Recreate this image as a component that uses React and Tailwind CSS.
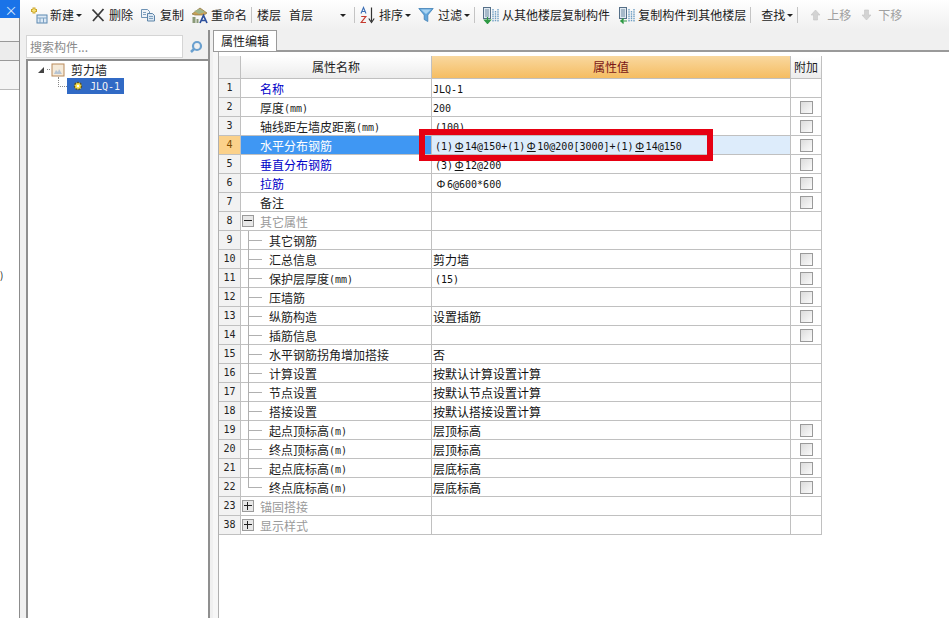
import React from "react";

const FONT = '"Noto Sans CJK SC","Liberation Sans",sans-serif';

const rows = [
  { n: "1", name: "名称", v: "JLQ-1", blue: true },
  { n: "2", name: "厚度(mm)", v: "200", check: true },
  { n: "3", name: "轴线距左墙皮距离(mm)", v: "(100)", check: true },
  { n: "4", name: "水平分布钢筋", v: "(1)§14@150+(1)§10@200[3000]+(1)§14@150", check: true, sel: true },
  { n: "5", name: "垂直分布钢筋", v: "(3)§12@200", blue: true, check: true },
  { n: "6", name: "拉筋", v: "Φ6@600*600", blue: true, check: true },
  { n: "7", name: "备注", v: "", check: true },
  { n: "8", name: "其它属性", v: "", group: "minus" },
  { n: "9", name: "其它钢筋", v: "", child: true },
  { n: "10", name: "汇总信息", v: "剪力墙", child: true, check: true },
  { n: "11", name: "保护层厚度(mm)", v: "(15)", child: true, check: true },
  { n: "12", name: "压墙筋", v: "", child: true, check: true },
  { n: "13", name: "纵筋构造", v: "设置插筋", child: true, check: true },
  { n: "14", name: "插筋信息", v: "", child: true, check: true },
  { n: "15", name: "水平钢筋拐角增加搭接", v: "否", child: true },
  { n: "16", name: "计算设置", v: "按默认计算设置计算", child: true },
  { n: "17", name: "节点设置", v: "按默认节点设置计算", child: true },
  { n: "18", name: "搭接设置", v: "按默认搭接设置计算", child: true },
  { n: "19", name: "起点顶标高(m)", v: "层顶标高", child: true, check: true },
  { n: "20", name: "终点顶标高(m)", v: "层顶标高", child: true, check: true },
  { n: "21", name: "起点底标高(m)", v: "层底标高", child: true, check: true },
  { n: "22", name: "终点底标高(m)", v: "层底标高", child: true, check: true, last: true },
  { n: "23", name: "锚固搭接", v: "", group: "plus" },
  { n: "38", name: "显示样式", v: "", group: "plus" },
];

function Txt({ s }) {
  const parts = s.match(/[\x00-\x7f]+|[§Φ]|[^\x00-\x7f§Φ]+/g) || [];
  return (
    <>
      {parts.map((p, i) => {
        if (p === "§") return <span key={i} className="relative -top-[1px] inline-block w-[12px] text-center text-[11px] underline">Φ</span>;
        if (p === "Φ") return <span key={i} className="relative -top-[1px] inline-block w-[12px] text-center text-[11px]">Φ</span>;
        if (/^[\x00-\x7f]/.test(p)) return <span key={i} className="relative -top-[1px] font-['DejaVu_Sans_Mono',monospace] text-[10px]">{p}</span>;
        return <span key={i} className="text-[12px]">{p}</span>;
      })}
    </>
  );
}

function Caret() {
  return <span className="ml-[2px] inline-block h-0 w-0 border-x-[3px] border-t-[3px] border-x-transparent border-t-[#222]" />;
}

function Sep() {
  return <span className="mx-[4px] h-[16px] w-px bg-[#c4c4c4]" />;
}

function IconNew() {
  return (
    <svg width="18" height="18" viewBox="0 0 18 18">
      <rect x="7" y="9" width="10" height="8" fill="#dce9f5" stroke="#5b87b0" />
      <path d="M7 12h10M10 12v5M13.500 12v5" stroke="#7fa3c4" />
      <path d="M4 1.500v6M1 4.500h6" stroke="#c9a227" strokeWidth="3" />
      <path d="M4 2.500v4M2 4.500h4" stroke="#f7e27a" strokeWidth="1.500" />
    </svg>
  );
}

function IconDelete() {
  return (
    <svg width="16" height="16" viewBox="0 0 16 16">
      <path d="M2.500 2.500 13.500 14M13.500 2L3 14" stroke="#3a3a3a" strokeWidth="1.800" fill="none" />
    </svg>
  );
}

function IconCopy() {
  return (
    <svg width="16" height="14" viewBox="0 0 16 14">
      <path d="M1.500 1.500h6l2 2v6h-8z" fill="#eef3f8" stroke="#6f93b5" />
      <path d="M7.500 5.500h5l2 2v5.500h-7z" fill="#dbe7f2" stroke="#5d84a8" />
      <path d="M3 4.500h3M3 6.500h3M9 8.500h4M9 10.500h4" stroke="#7fa0bf" />
    </svg>
  );
}

function IconRename() {
  return (
    <svg width="18" height="18" viewBox="0 0 18 18">
      <path d="M1 8 9 2l7 5-3 2H4z" fill="#c9a257" stroke="#8a7440" strokeWidth=".7" />
      <path d="M3 5 9 3l5 3-6 2z" fill="#9fb58a" />
      <path d="M1.500 11h3v6h-3zM5.500 13h2v4h-2z" fill="#8a9a78" />
      <path d="M9 17 12.500 9.500 16 17M10.500 14.500h4" stroke="#2c4f9c" strokeWidth="1.700" fill="none" />
    </svg>
  );
}

function IconSort() {
  return (
    <svg width="16" height="18" viewBox="0 0 16 18">
      <path d="M1 7.500 3.500 1.500 6 7.500M2 5.500h3" stroke="#3c6fb5" strokeWidth="1.100" fill="none" />
      <path d="M1.200 10.500h4.600L1.200 16.500h4.800" stroke="#c53a2e" strokeWidth="1.200" fill="none" />
      <path d="M11.500 1.500v14" stroke="#333" strokeWidth="1.200" />
      <path d="M8.800 12.500 11.500 16.500 14.200 12.500" stroke="#333" strokeWidth="1.200" fill="none" />
    </svg>
  );
}

function IconFilter() {
  return (
    <svg width="16" height="16" viewBox="0 0 16 16">
      <path d="M.8 1.500h14.400L9.800 8v6.500l-3.600-2V8z" fill="#63a7dc" stroke="#3f7fb5" strokeWidth=".8" />
      <path d="M3 2.500h10L8 7z" fill="#a9d4f2" />
    </svg>
  );
}

function IconFloorCopy({ up }) {
  return (
    <svg width="18" height="18" viewBox="0 0 18 18">
      <rect x="1.500" y="1.500" width="7" height="11" fill="#dfe8f0" stroke="#556f88" />
      <path d="M3 4h4M3 6h4M3 8h4M3 10h4" stroke="#6f8aa3" />
      <path d="M11 3v13M13.500 5v11M16 3v13" stroke="#6f9fc4" strokeWidth="1.400" strokeDasharray="1.500 .7" />
      <path d={up ? "M2 15h7M5.500 12.500 3 15l2.500 2.500" : "M5.500 11v4M2.500 14 5.500 17.500 8.500 14z"} fill="#2f9a45" stroke="#2f9a45" strokeWidth="1.200" />
    </svg>
  );
}

function IconMove({ up }) {
  return (
    <svg width="11" height="12" viewBox="0 0 11 12">
      <path d={up ? "M5.500 1 10 6H7.500v5h-4V6H1z" : "M5.500 11 10 6H7.500V1h-4v5H1z"} fill="#d3d3d3" stroke="#c4c4c4" strokeWidth=".6" />
    </svg>
  );
}

function Toolbar() {
  return (
    <div className="flex h-[30px] items-center whitespace-nowrap bg-[linear-gradient(#ffffff,#f0f0f0)] pl-[10px] text-[12px] text-[#1c1c1c]">
      <span className="flex items-center"><IconNew /><span className="ml-[2px]">新建</span><Caret /></span>
      <span className="ml-[8px] flex items-center"><IconDelete /><span className="ml-[3px]">删除</span></span>
      <span className="ml-[7px] flex items-center"><IconCopy /><span className="ml-[4px]">复制</span></span>
      <span className="ml-[7px] flex items-center"><IconRename /><span className="ml-[2px]">重命名</span></span>
      <Sep />
      <span className="ml-[1px]">楼层</span>
      <span className="ml-[8px] flex w-[61px] items-center justify-between pr-[4px]">首层<Caret /></span>
      <Sep />
      <span className="ml-[1px] flex items-center"><IconSort /><span className="ml-[3px]">排序</span><Caret /></span>
      <span className="ml-[7px] flex items-center"><IconFilter /><span className="ml-[4px]">过滤</span><Caret /></span>
      <Sep />
      <span className="ml-[3px] flex items-center"><IconFloorCopy /><span className="ml-[2px]">从其他楼层复制构件</span></span>
      <span className="ml-[8px] flex items-center"><IconFloorCopy up /><span className="ml-[2px]">复制构件到其他楼层</span></span>
      <Sep />
      <span className="ml-[6px] flex items-center">查找<Caret /></span>
      <Sep />
      <span className="ml-[8px] flex items-center text-[#a0a0a0]"><IconMove up /><span className="ml-[6px]">上移</span></span>
      <span className="ml-[10px] flex items-center text-[#a0a0a0]"><IconMove /><span className="ml-[6px]">下移</span></span>
    </div>
  );
}

function LeftStrip() {
  return (
    <div className="flex h-full w-[20px] shrink-0 flex-col">
      <div className="flex h-[18px] items-center justify-center bg-[#1a73e8] pl-[2px] text-[13px] leading-none text-[#d8e8fb]">×</div>
      <div className="flex min-h-0 flex-1 flex-col border-r border-[#8c8c8c]">
        <div className="h-[23px] bg-[#f4f4f4]" />
        <div className="h-[20px] border-y border-[#999] bg-[#ececec]" />
        <div className="h-[29px] border-b border-[#bbb] bg-[#f4f4f4]" />
        <div className="flex-1 bg-white pt-[180px] text-[10px] leading-none text-[#222]">)</div>
      </div>
    </div>
  );
}

function Tree() {
  return (
    <div className="flex w-[190px] shrink-0 flex-col border-r-2 border-[#8f8f8f] bg-[#f0f0f0] pl-[6px]">
      <div className="mb-[1px] mt-[5px] flex h-[23px] items-center justify-between pr-[5px] text-[12px] text-[#8a8a8a]">
        <span className="flex h-full w-[157px] items-center border border-[#d5d5d5] bg-white pl-[3px]">搜索构件...</span>
        <svg width="14" height="14" viewBox="0 0 14 14">
          <circle cx="8" cy="6" r="4" fill="none" stroke="#6aa0cf" strokeWidth="2.200" />
          <path d="M5 9 2 12" stroke="#6aa0cf" strokeWidth="2.500" />
        </svg>
      </div>
      <div className="min-h-0 flex-1 border-l-2 border-t-2 border-[#8f8f8f] bg-white text-[12px] text-[#1c1c1c]">
        <div className="flex h-[17px] items-center pl-[10px]">
          <span className="h-0 w-0 border-b-[6px] border-l-[6px] border-b-[#444] border-l-transparent" />
          <span className="ml-[3px] w-[3px] border-t border-dotted border-[#888]" />
          <svg width="14" height="14" viewBox="0 0 14 14" className="ml-[1px]">
            <rect x="1" y="1" width="12" height="12" fill="#f5ead9" stroke="#b98a5b" />
            <path d="M3 11l2-4 2 2 1-3 3 5z" fill="#b7c4d2" />
          </svg>
          <span className="ml-[6px]">剪力墙</span>
        </div>
        <div className="flex h-[16px] items-center pl-[30px]">
          <span className="mb-[8px] h-[10px] w-[9px] border-b border-l border-dotted border-[#888]" />
          <span className="flex h-[16px] w-[57px] items-center bg-[#316ac5] pl-[5px] text-[#f4f4f4]">
            <svg width="12" height="12" viewBox="0 0 12 12">
              <circle cx="6" cy="6" r="3.500" fill="#f8e04a" stroke="#5a5020" strokeWidth="1.400" strokeDasharray="2 1" />
              <circle cx="6" cy="6" r="1.200" fill="#fff" />
            </svg>
            <span className="ml-[6px]"><Txt s="JLQ-1" /></span>
          </span>
        </div>
      </div>
    </div>
  );
}

function Check() {
  return <span className="block h-[13px] w-[13px] border border-[#9a9a9a] bg-[linear-gradient(135deg,#dcdcdc,#fbfbfb)]" />;
}

function Box({ plus }) {
  return (
    <span className="relative block h-[12px] w-[12px] border border-[#9b9b9b] bg-[#e8e8e8]">
      <span className="absolute left-[1px] top-[4px] h-px w-[8px] bg-[#222]" />
      {plus && <span className="absolute left-[4px] top-[1px] h-[8px] w-px bg-[#222]" />}
    </span>
  );
}

function Row({ r }) {
  const nameColor = r.sel ? "text-white" : r.blue ? "text-[#0000c8]" : r.group ? "text-[#9a9a9a]" : "text-[#1c1c1c]";
  const inset = r.v.startsWith("(") || r.v.startsWith("Φ");
  return (
    <div className="flex h-[19px] border-b border-[#c0c0c0]">
      <div className={`flex w-[22px] shrink-0 items-center justify-center border-r border-[#c0c0c0] ${r.sel ? "bg-[#fbd18a] text-[#7a4a00]" : "bg-[#f2f2f2] text-[#222]"}`}><Txt s={r.n} /></div>
      <div className={`relative flex w-[191px] shrink-0 items-center border-r border-[#c0c0c0] pb-[2px] ${nameColor} ${r.sel ? "bg-[#3f97f3]" : "bg-white"} ${r.child ? "pl-[28px]" : "pl-[19px]"}`}>
        {r.group && <span className="absolute left-[1px] top-[3px]"><Box plus={r.group === "plus"} /></span>}
        {r.child && <span className={`absolute left-[7px] top-0 w-px bg-[#b0b0b0] ${r.last ? "h-[10px]" : "h-[19px]"}`} />}
        {r.child && <span className="absolute left-[7px] top-[9px] h-px w-[14px] bg-[#b0b0b0]" />}
        <span className="whitespace-pre"><Txt s={r.name} /></span>
      </div>
      <div className={`flex w-[359px] shrink-0 items-center border-r border-[#c0c0c0] pb-[2px] text-[#111] ${inset ? "pl-[3px]" : "pl-[1px]"} ${r.sel ? "bg-[#ddecfb]" : "bg-white"}`}>
        <span className="whitespace-pre"><Txt s={r.v} /></span>
      </div>
      <div className="flex w-[31px] shrink-0 items-center justify-center border-r border-[#c0c0c0] bg-white">
        {r.check && <Check />}
      </div>
    </div>
  );
}

function Grid() {
  return (
    <div className="relative flex min-w-0 flex-1 flex-col bg-[#f0f0f0] pl-[3px]">
      <div className="relative z-10 -mb-px flex h-[21px] w-[64px] items-center justify-center border border-b-0 border-[#9a9a9a] bg-white text-[12px] text-[#1c1c1c]">属性编辑</div>
      <div className="min-h-0 flex-1 border-t-2 border-[#9a9a9a] bg-[#f7f7f7] pl-[5px]">
        <div className="h-full border-l border-[#b0b0b0] bg-white pt-[4px]">
          <div className="w-[603px]">
            <div className="flex h-[23px] border-b border-[#c0c0c0] text-[12px]">
              <div className="w-[22px] shrink-0 border-r border-[#c0c0c0] bg-[#efefef]" />
              <div className="flex w-[191px] shrink-0 items-center justify-center border-r border-[#c0c0c0] bg-[linear-gradient(#ffffff,#ececec)] text-[#1c1c1c]">属性名称</div>
              <div className="flex w-[359px] shrink-0 items-center justify-center border-r border-[#c0c0c0] bg-[linear-gradient(#f9d89f,#f5bd62)] text-[#7a1515]">属性值</div>
              <div className="flex w-[31px] shrink-0 items-center justify-center border-r border-[#c0c0c0] bg-[linear-gradient(#ffffff,#ececec)] text-[#1c1c1c]">附加</div>
            </div>
            {rows.map((r) => <Row key={r.n} r={r} />)}
          </div>
        </div>
      </div>
      <div className="pointer-events-none absolute left-[209px] top-[99px] z-20 h-[32px] w-[294px] border-[6px] border-[#e60012]" />
    </div>
  );
}

export default function App() {
  return (
    <div className="flex h-[618px] w-[949px] overflow-hidden bg-[#f0f0f0]" style={{ fontFamily: FONT }}>
      <LeftStrip />
      <div className="flex min-w-0 flex-1 flex-col">
        <Toolbar />
        <div className="flex h-[588px]">
          <Tree />
          <Grid />
        </div>
      </div>
    </div>
  );
}
